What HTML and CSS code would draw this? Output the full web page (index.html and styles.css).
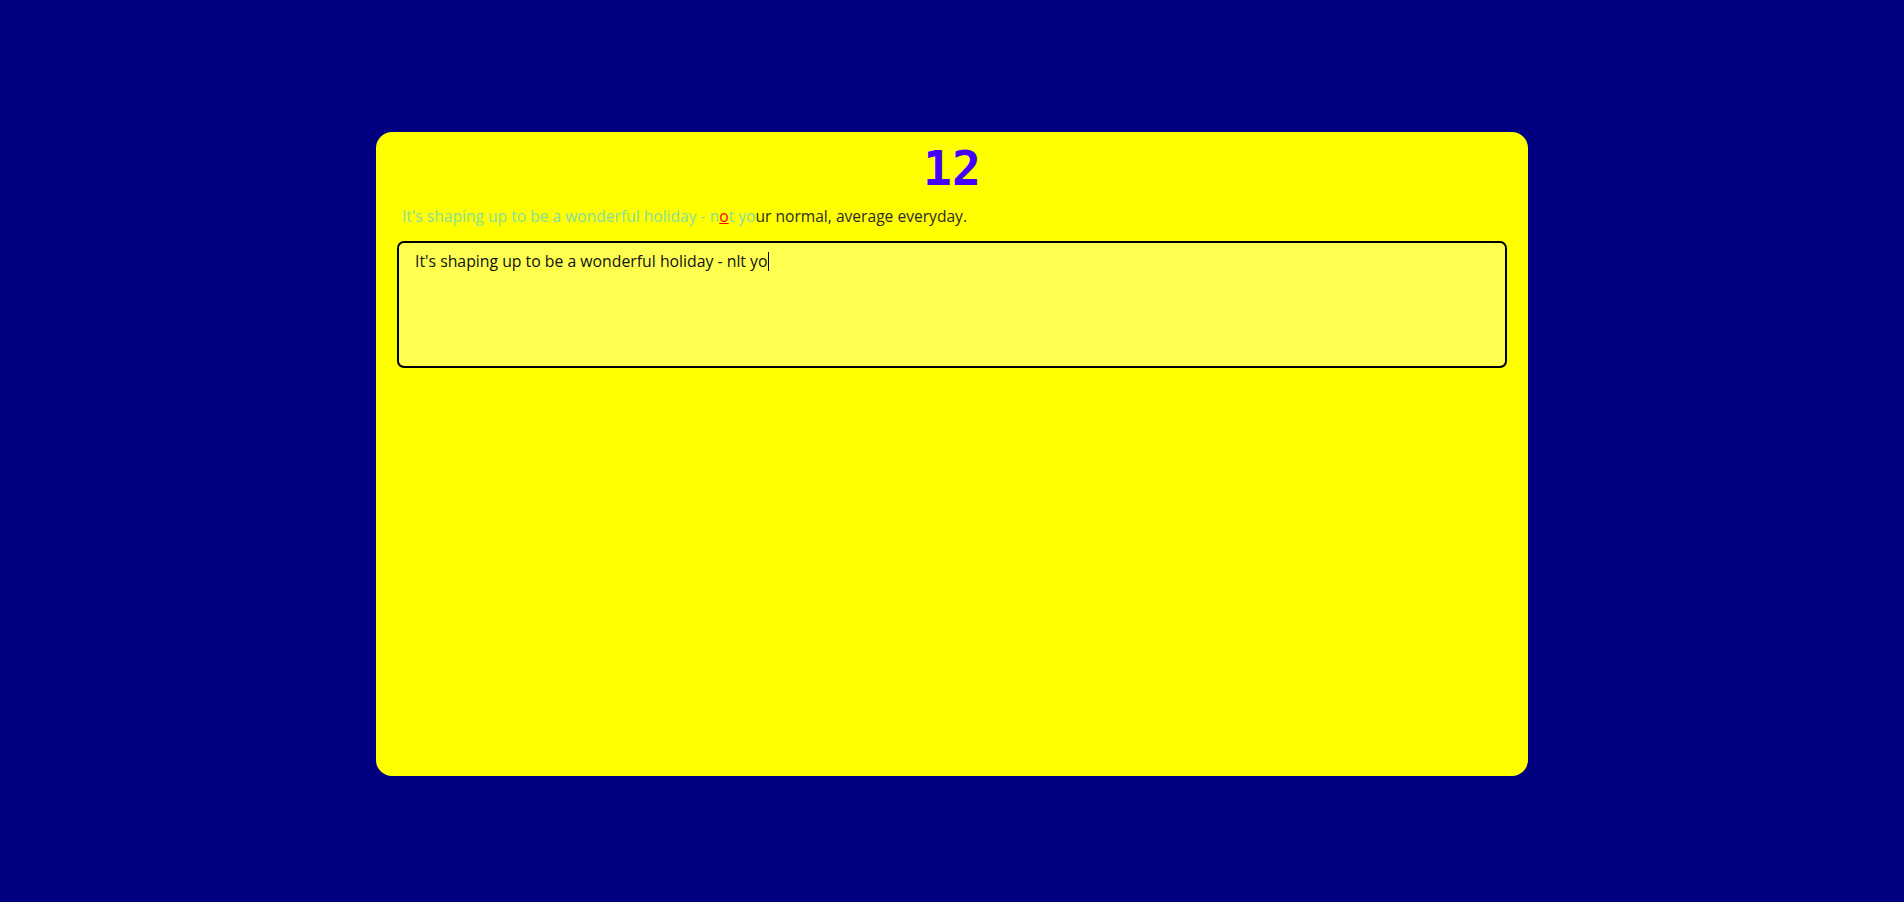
FILE: index.html
```html
<!DOCTYPE html>
<html lang="en">
<head>
<meta charset="utf-8">
<title>Typing</title>
<link rel="stylesheet" href="styles.css">
</head>
<body>
<main class="card">
  <h1 class="count">12</h1>
  <p class="prompt"><span class="typed">It's shaping up to be a wonderful holiday - n</span><span class="wrong">o</span><span class="typed">t yo</span><span class="rest">ur normal, average everyday.</span></p>
  <div class="input"><span class="input-text">It's shaping up to be a wonderful holiday - nlt yo</span><span class="caret"></span></div>
</main>
</body>
</html>
```
FILE: styles.css
```css
html, body {
  margin: 0;
  padding: 0;
}
body {
  background: #000080;
  min-height: 100vh;
  display: flex;
  flex-direction: column;
  align-items: center;
  padding-top: 132px;
  box-sizing: border-box;
  font-family: "Open Sans", "Noto Sans", sans-serif;
}
.card {
  width: 1152px;
  height: 644px;
  box-sizing: border-box;
  background: #ffff00;
  border-radius: 16px;
  padding: 8px 21px 0 21px;
  display: flex;
  flex-direction: column;
}
.count {
  margin: 0;
  text-align: center;
  font-family: "DejaVu Sans Mono", monospace;
  font-weight: bold;
  font-size: 48px;
  line-height: 56px;
  color: #4400ff;
}
.prompt {
  margin: 9px 0 0 0;
  padding-left: 5px;
  font-size: 15.6px;
  line-height: 22px;
  color: #2b2b2b;
}
.typed {
  color: #86dea0;
}
.wrong {
  color: #ff0000;
  text-decoration: underline;
}
.input {
  margin-top: 14px;
  height: 127px;
  box-sizing: border-box;
  border: 2px solid #000;
  border-radius: 7px;
  background: #ffff50;
  padding: 7px 16px;
  font-size: 15.8px;
  line-height: 22px;
  color: #111;
}
.caret {
  display: inline-block;
  width: 1px;
  height: 19px;
  background: #000;
  vertical-align: -4px;
}
```
